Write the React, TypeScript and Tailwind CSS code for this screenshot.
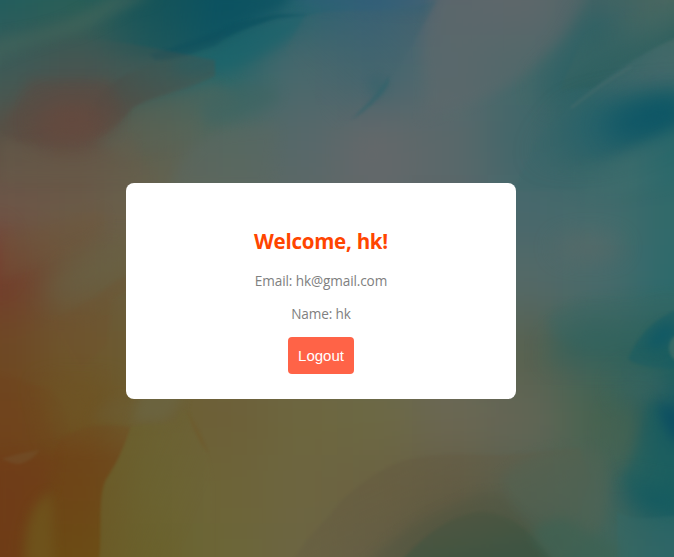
const xs = [0, 75, 150, 225, 300, 375, 450, 525, 600, 674];
const ys = [0, 70, 140, 210, 280, 350, 420, 490, 557];

// Dimmed wallpaper tones, one row for each entry of ys.
const tones = [
  ['#225d5d', '#286058', '#165358', '#0b5462', '#22626e', '#33607a', '#59656c', '#5f676a', '#3f6364', '#4a675f'],
  ['#3e5c58', '#4a5450', '#365e5c', '#27676a', '#4a686c', '#41656e', '#566a6e', '#456869', '#306466', '#426b68'],
  ['#5c5144', '#624e42', '#5c6050', '#56685f', '#56686a', '#64686a', '#5a686a', '#41676a', '#2b6264', '#24666a'],
  ['#6e5648', '#6b5b48', '#69624c', '#62685c', '#5c6866', '#62686a', '#5a6769', '#47686c', '#456b6c', '#316a6a'],
  ['#733e2c', '#6b5538', '#69603e', '#66624a', '#626452', '#5c685c', '#5c6862', '#546967', '#496a6b', '#2d6a6c'],
  ['#6e4824', '#6e562c', '#6b5c34', '#6c623c', '#6c6448', '#6a684e', '#66685a', '#58614f', '#3d645c', '#20625e'],
  ['#70441c', '#6e501e', '#6c6032', '#6d6038', '#6d663e', '#6c6843', '#6b6752', '#636656', '#48634f', '#125662'],
  ['#6e3d18', '#6d4616', '#6b622e', '#6d6438', '#6d6540', '#6b6242', '#635d44', '#556050', '#48645a', '#1c6062'],
  ['#6c3c14', '#6c4e16', '#6a6026', '#6c6638', '#6c6542', '#655f46', '#4e533e', '#3a5444', '#40655a', '#2b6467'],
];

function edge(list: number[], i: number, max: number) {
  const start = i === 0 ? -120 : (list[i - 1] + list[i]) / 2;
  const end = i === list.length - 1 ? max + 120 : (list[i] + list[i + 1]) / 2;
  return { start, size: end - start + 1 };
}

function Wallpaper() {
  return (
    <svg className="absolute inset-0 h-full w-full" viewBox="0 0 674 557" preserveAspectRatio="none" aria-hidden="true">
      <defs>
        <filter id="mesh" filterUnits="userSpaceOnUse" x="-120" y="-120" width="914" height="797" colorInterpolationFilters="sRGB">
          <feGaussianBlur stdDeviation="24" />
        </filter>
        <filter id="wide" filterUnits="userSpaceOnUse" x="-120" y="-120" width="914" height="797" colorInterpolationFilters="sRGB">
          <feGaussianBlur stdDeviation="13" />
        </filter>
        <filter id="soft" filterUnits="userSpaceOnUse" x="-60" y="-60" width="794" height="677" colorInterpolationFilters="sRGB">
          <feGaussianBlur stdDeviation="6" />
        </filter>
        <filter id="crisp" filterUnits="userSpaceOnUse" x="-60" y="-60" width="794" height="677" colorInterpolationFilters="sRGB">
          <feGaussianBlur stdDeviation="1.6" />
        </filter>
        <linearGradient id="leafTop" gradientUnits="userSpaceOnUse" x1="100" y1="0" x2="215" y2="20">
          <stop offset="0" stopColor="#1f5958" stopOpacity="0" />
          <stop offset="0.5" stopColor="#14545a" stopOpacity="0.8" />
          <stop offset="1" stopColor="#0b5160" />
        </linearGradient>
        <linearGradient id="redLobe" gradientUnits="userSpaceOnUse" x1="50" y1="45" x2="85" y2="145">
          <stop offset="0" stopColor="#3b5a58" />
          <stop offset="0.4" stopColor="#4c544e" />
          <stop offset="0.75" stopColor="#5e493f" />
          <stop offset="1" stopColor="#684f42" />
        </linearGradient>
        <linearGradient id="lobeShade" gradientUnits="userSpaceOnUse" x1="90" y1="130" x2="200" y2="60">
          <stop offset="0" stopColor="#5a483f" stopOpacity="0" />
          <stop offset="0.4" stopColor="#4a4c46" />
          <stop offset="1" stopColor="#2f5f5e" stopOpacity="0.4" />
        </linearGradient>
        <linearGradient id="blueLeaf" gradientUnits="userSpaceOnUse" x1="545" y1="150" x2="665" y2="115">
          <stop offset="0" stopColor="#32646a" stopOpacity="0.3" />
          <stop offset="0.5" stopColor="#24616a" />
          <stop offset="1" stopColor="#105a66" />
        </linearGradient>
        <linearGradient id="leafUnder" gradientUnits="userSpaceOnUse" x1="560" y1="0" x2="674" y2="0">
          <stop offset="0" stopColor="#43706f" stopOpacity="0" />
          <stop offset="0.6" stopColor="#43706f" />
          <stop offset="1" stopColor="#2c6a6c" />
        </linearGradient>
        <linearGradient id="fold" gradientUnits="userSpaceOnUse" x1="430" y1="0" x2="320" y2="120">
          <stop offset="0" stopColor="#3a616e" />
          <stop offset="1" stopColor="#52686c" stopOpacity="0" />
        </linearGradient>
        <linearGradient id="upperRight" gradientUnits="userSpaceOnUse" x1="632" y1="64" x2="605" y2="20">
          <stop offset="0" stopColor="#285d5c" />
          <stop offset="0.5" stopColor="#3b6461" stopOpacity="0.6" />
          <stop offset="1" stopColor="#4a675f" stopOpacity="0" />
        </linearGradient>
        <linearGradient id="amber" gradientUnits="userSpaceOnUse" x1="95" y1="425" x2="85" y2="557">
          <stop offset="0" stopColor="#704720" stopOpacity="0.5" />
          <stop offset="0.25" stopColor="#704218" />
          <stop offset="1" stopColor="#6c4a14" />
        </linearGradient>
        <linearGradient id="olive" gradientUnits="userSpaceOnUse" x1="105" y1="450" x2="205" y2="490">
          <stop offset="0" stopColor="#6a602c" />
          <stop offset="1" stopColor="#6d663a" stopOpacity="0.35" />
        </linearGradient>
        <linearGradient id="brownRidge" gradientUnits="userSpaceOnUse" x1="390" y1="470" x2="430" y2="557">
          <stop offset="0" stopColor="#645a41" />
          <stop offset="1" stopColor="#625a44" stopOpacity="0.2" />
        </linearGradient>
        <linearGradient id="greenHill" gradientUnits="userSpaceOnUse" x1="480" y1="510" x2="490" y2="557">
          <stop offset="0" stopColor="#4a5540" />
          <stop offset="1" stopColor="#365442" />
        </linearGradient>
      </defs>

      <g filter="url(#mesh)">
        {tones.map((row, r) =>
          row.map((color, c) => {
            const h = edge(xs, c, 674);
            const v = edge(ys, r, 557);
            return <rect key={`${r}-${c}`} x={h.start} y={v.start} width={h.size} height={v.size} fill={color} />;
          }),
        )}
      </g>

      {/* Upper left strokes */}
      <g filter="url(#soft)">
        <path d="M0 44C45 40 80 26 115 10L160 0H120C80 20 40 32 0 36Z" fill="#3c655c" opacity="0.4" />
        <path d="M-10 64C35 40 62 40 90 28C120 12 140 4 155 -8L110 -8C90 15 40 36 -10 42Z" fill="#48675c" opacity="0.45" />
      </g>
      <path filter="url(#soft)" d="M80 40C120 20 140 -5 165 -10H300L278 10C260 16 240 24 222 39C200 48 180 56 158 56C135 58 115 56 95 50Z" fill="url(#leafTop)" opacity="0.7" />
      <path filter="url(#crisp)" d="M150 54C190 42 210 34 230 26C247 20 266 18 278 14L264 22C244 29 225 36 215 46C194 53 180 59 155 60Z" fill="#0c4d5c" opacity="0.4" />
      <path filter="url(#soft)" d="M222 47C238 30 260 25 307 16L285 42C270 52 252 62 232 70L180 74L170 64Z" fill="#18646c" opacity="0.6" />
      <path filter="url(#crisp)" d="M225 27C246 21 262 18 280 14L310 15L288 17C268 19 246 27 225 37Z" fill="#0d5361" opacity="0.65" />
      <path filter="url(#crisp)" d="M-5 70C30 50 50 48 80 41C105 36 160 50 215 60V76C180 92 146 98 132 108C122 121 108 135 96 137C80 144 65 143 45 143C22 146 8 140 -5 126Z" fill="url(#redLobe)" opacity="0.3" />
      <path filter="url(#soft)" d="M5 122C30 142 70 145 96 137L124 112L110 80L30 80Z" fill="#5f493f" opacity="0.45" />
      <ellipse filter="url(#wide)" cx="72" cy="120" rx="34" ry="18" fill="#6a493d" opacity="0.6" />
      <path filter="url(#crisp)" d="M215 76C180 92 146 98 132 108C122 121 108 135 94 138C80 130 90 105 105 90C125 70 160 60 200 62Z" fill="url(#lobeShade)" opacity="0.4" />
      <path filter="url(#soft)" d="M215 82C190 93 148 103 137 112C123 127 108 139 94 143L125 158L190 140L240 100Z" fill="#5a6658" opacity="0.35" />
      <path filter="url(#soft)" d="M0 142C30 138 40 158 76 155C88 150 110 150 132 135L150 183H0Z" fill="#685e4b" opacity="0.4" />
      <path filter="url(#soft)" d="M170 190C178 155 200 137 230 130L280 125L270 190Z" fill="#596862" opacity="0.45" />
      <path filter="url(#soft)" d="M205 126C235 118 265 112 280 98C280 85 250 80 230 88L200 104Z" fill="#3e6562" opacity="0.55" />

      {/* Blue fold running down the middle */}
      <path filter="url(#crisp)" d="M325 12C370 8 400 14 437 0C425 24 410 48 397 68C382 92 366 110 348 122L315 148C340 100 290 60 285 50L305 16Z" fill="url(#fold)" opacity="0.6" />
      <path filter="url(#soft)" d="M280 -10H440L427 11C390 15 350 6 315 8Z" fill="#315f77" opacity="0.5" />
      <path filter="url(#crisp)" d="M389 75C378 94 362 108 351 120C364 112 379 101 389 84Z" fill="#2d636b" opacity="0.5" />
      <ellipse filter="url(#soft)" cx="377" cy="86" rx="8" ry="11" fill="#2b626b" opacity="0.45" />
      <path filter="url(#soft)" d="M438 -10H588C580 22 560 42 540 60C522 82 494 92 476 102L420 120C440 80 405 70 438 -10Z" fill="#5e686b" opacity="0.5" />
      <ellipse filter="url(#wide)" cx="372" cy="155" rx="24" ry="28" fill="#66686b" opacity="0.2" />
      <path filter="url(#wide)" d="M585 5C580 45 548 60 536 92L560 108L600 75L630 38Z" fill="#2a6064" opacity="0.65" />

      {/* Upper right leaves */}
      <path filter="url(#crisp)" d="M680 36C640 54 602 78 570 105C555 122 545 132 534 145L514 190H580C610 168 680 165 680 130Z" fill="#39676a" opacity="0.3" />
      <path filter="url(#crisp)" d="M680 36C640 54 616 70 594 88L560 90L590 20L680 0Z" fill="url(#upperRight)" opacity="0.7" />
      <path filter="url(#wide)" d="M680 50L680 82L600 100L594 90Z" fill="#48696c" opacity="0.8" />
      <path filter="url(#wide)" d="M674 92C640 94 605 100 571 110C555 126 543 138 535 157C555 163 590 160 612 153C635 147 655 137 690 120V92Z" fill="url(#blueLeaf)" />
      <ellipse filter="url(#wide)" cx="650" cy="119" rx="46" ry="14" fill="#085265" opacity="0.65" transform="rotate(-14 650 119)" />
      <path filter="url(#crisp)" d="M632 66L600 86L571 108" fill="none" stroke="#56716f" strokeWidth="2.5" opacity="0.35" />
      <path filter="url(#soft)" d="M690 124C654 138 628 152 612 157C590 166 560 166 530 168L560 190C600 205 640 190 690 180Z" fill="url(#leafUnder)" opacity="0.5" />

      {/* Right edge */}
      <ellipse filter="url(#wide)" cx="588" cy="247" rx="34" ry="9" fill="#646a66" opacity="0.7" />
      <path filter="url(#soft)" d="M690 288C650 297 625 297 598 300C575 303 563 308 552 313C545 320 550 330 560 340L590 350L690 345Z" fill="#3a6864" opacity="0.45" />
      <path filter="url(#wide)" d="M550 348C560 330 580 322 600 322C620 329 640 330 655 320L674 310V362H550Z" fill="#2c605a" opacity="0.5" />
      <path filter="url(#crisp)" d="M680 308C655 318 638 336 630 355C620 363 660 372 680 368Z" fill="#0f5a64" opacity="0.4" />
      <ellipse filter="url(#soft)" cx="662" cy="336" rx="18" ry="9" fill="#0b5766" opacity="0.7" transform="rotate(-40 662 336)" />
      <ellipse filter="url(#crisp)" cx="677" cy="348" rx="8" ry="12" fill="#3a6b66" opacity="0.85" />
      <ellipse filter="url(#wide)" cx="644" cy="387" rx="28" ry="14" fill="#3e6661" opacity="0.75" />
      <path filter="url(#wide)" d="M615 410L640 402L632 460L612 475Z" fill="#4d6550" opacity="0.7" />
      <path filter="url(#soft)" d="M648 405C655 400 665 405 685 415V514C658 512 638 500 622 480C632 462 642 440 648 405Z" fill="#1c605f" opacity="0.5" />
      <path filter="url(#soft)" d="M657 404L688 412V446C668 442 665 425 657 404Z" fill="#0b4d62" opacity="0.85" />
      <path filter="url(#wide)" d="M620 478C650 492 674 487 690 495V514H650C634 511 625 500 620 478Z" fill="#115960" opacity="0.85" />
      <path filter="url(#crisp)" d="M617 512C640 523 654 516 680 516V565H618Z" fill="#336a68" opacity="0.4" />

      {/* Left edge */}
      <ellipse filter="url(#wide)" cx="-5" cy="254" rx="9" ry="28" fill="#80382b" opacity="0.5" />
      <path filter="url(#soft)" d="M0 236C45 226 80 215 100 210C118 228 90 250 48 263L0 280Z" fill="#70573a" opacity="0.35" />
      <path filter="url(#wide)" d="M44 302C50 280 60 268 78 258L128 240V275L98 294C78 303 60 309 44 302Z" fill="#68664a" opacity="0.5" />
      <path filter="url(#crisp)" d="M132 275C115 279 105 288 96 297C80 304 66 314 50 322L80 372L106 345L112 300L132 288Z" fill="#72502e" opacity="0.2" />
      <path filter="url(#crisp)" d="M-5 372C17 379 34 385 46 389C64 394 78 430 58 447L35 452L-5 458Z" fill="#70421d" opacity="0.25" />
      <path filter="url(#wide)" d="M40 385H120L88 428L50 440C64 420 50 405 40 385Z" fill="#6e5526" opacity="0.7" />
      <path filter="url(#soft)" d="M110 399H180L177 421L158 424L130 425L90 420Z" fill="#6c5c34" opacity="0.5" />
      <path filter="url(#soft)" d="M142 385H184C180 412 172 420 158 422H140L132 423Z" fill="#6b6644" opacity="0.7" />
      <path filter="url(#crisp)" d="M64 436C92 423 114 424 131 427C123 452 115 466 106 480C97 500 103 535 99 562H53L54 490C50 470 52 448 64 436Z" fill="url(#amber)" opacity="0.6" />
      <path filter="url(#soft)" d="M-8 458C25 452 45 454 56 449L50 490C30 507 21 525 22 565H-8Z" fill="#713c18" opacity="0.55" />
      <path filter="url(#crisp)" d="M2 459C13 455 25 452 40 450C34 457 28 462 20 464C14 464 9 462 2 459Z" fill="#735c38" opacity="0.35" />
      <path filter="url(#soft)" d="M52 492C35 503 25 515 25 565H54Z" fill="#6f561d" opacity="0.8" />
      <path filter="url(#crisp)" d="M131 427C145 423 157 426 175 422C180 410 185 410 190 414C205 440 211 461 213 485V562H99C103 530 97 499 106 480C115 466 123 452 131 427Z" fill="url(#olive)" opacity="0.7" />
      <path filter="url(#crisp)" d="M187 411C196 424 203 438 209 454C199 444 193 428 187 411Z" fill="#715425" opacity="0.4" />

      {/* Bottom hills */}
      <path filter="url(#crisp)" d="M290 565C310 532 325 523 342 500C365 480 390 461 421 457C450 453 475 455 495 455C520 455 545 450 580 448L590 480L560 565Z" fill="url(#brownRidge)" opacity="0.45" />
      <path filter="url(#soft)" d="M500 479C530 450 560 445 598 450C610 465 612 500 600 530L560 565L540 545C522 520 514 505 500 479Z" fill="#526352" opacity="0.5" />
      <path filter="url(#soft)" d="M365 565C386 544 400 534 422 521C452 506 480 490 500 495L535 530L552 565Z" fill="#505641" opacity="0.5" />
      <path filter="url(#crisp)" d="M400 562C430 529 455 514 480 512C512 513 530 531 554 562Z" fill="url(#greenHill)" opacity="0.55" />
      <path filter="url(#soft)" d="M530 534C545 520 558 518 567 519C585 530 600 540 617 545V565H554Z" fill="#3d6253" opacity="0.65" />
    </svg>
  );
}

export default function App() {
  return (
    <main className="relative flex h-screen w-full items-center justify-center overflow-hidden bg-[#56655a] pt-[25px] pr-8">
      <Wallpaper />
      <section className="relative flex h-[216px] w-[390px] flex-col items-center rounded-lg bg-white pt-[42px] font-['Open_Sans','Noto_Sans',sans-serif]">
        <h2 className="text-[20.5px] leading-8 font-bold tracking-[-0.25px] whitespace-nowrap text-[#ff4500]">Welcome, hk!</h2>
        <p className="mt-[14px] text-[13.6px] leading-5 tracking-[-0.12px] whitespace-nowrap text-[#808080]">Email: hk@gmail.com</p>
        <p className="mt-[13px] text-[13.6px] leading-5 tracking-[-0.12px] whitespace-nowrap text-[#808080]">Name: hk</p>
        <button className="mt-[13px] h-[37px] w-[66px] rounded bg-[#ff6347] font-['Liberation_Sans',Arial,sans-serif] text-[15px] leading-[17px] text-white">
          Logout
        </button>
      </section>
    </main>
  );
}
